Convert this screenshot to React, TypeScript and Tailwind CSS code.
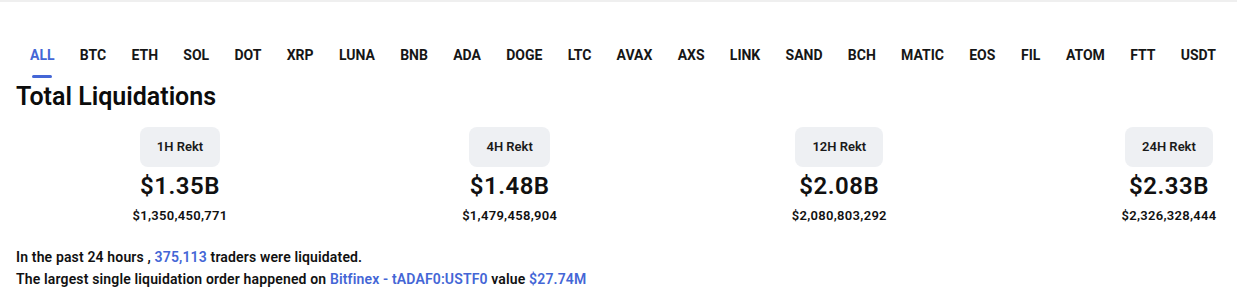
import React from 'react';

const coins = ['ALL', 'BTC', 'ETH', 'SOL', 'DOT', 'XRP', 'LUNA', 'BNB', 'ADA', 'DOGE', 'LTC', 'AVAX', 'AXS', 'LINK', 'SAND', 'BCH', 'MATIC', 'EOS', 'FIL', 'ATOM', 'FTT', 'USDT'];

const stats = [
  { label: '1H Rekt', short: '$1.35B', full: '$1,350,450,771' },
  { label: '4H Rekt', short: '$1.48B', full: '$1,479,458,904' },
  { label: '12H Rekt', short: '$2.08B', full: '$2,080,803,292' },
  { label: '24H Rekt', short: '$2.33B', full: '$2,326,328,444' },
];

export default function App() {
  const active = 'ALL';

  return (
    <div className="w-[1237px] h-[300px] bg-white border-t-2 border-[#efefef] text-[#111] font-['Roboto','Liberation_Sans',sans-serif] overflow-hidden">
      {/* coin tabs */}
      <div className="flex justify-between pl-[30px] pr-[21px] pt-[43px]">
        {coins.map((c) => (
          <button key={c} className="flex flex-col items-center">
            <span className={`text-[14px] leading-[20px] font-bold ${c === active ? 'text-[#4466d6]' : 'text-[#161616]'}`}>{c}</span>
            <span className={`mt-[10px] h-[3px] w-5 rounded-sm ${c === active ? 'bg-[#4466d6]' : 'bg-transparent'}`} />
          </button>
        ))}
      </div>

      <h2 className="mt-[3px] pl-4 text-[25px] leading-[32px] font-semibold text-[#0c0c0c]">Total Liquidations</h2>

      {/* rekt stats */}
      <div className="flex justify-between pl-[120px] pr-[8px] mt-[14px]">
        {stats.map((s) => (
          <div key={s.label} className="w-[120px] flex flex-col items-center">
            <div className="h-10 px-[17px] rounded-lg bg-[#eef0f3] flex items-center justify-center text-[13px] font-semibold text-[#1a1a1a]">
              {s.label}
            </div>
            <div className="mt-[5px] text-[24px] leading-[28px] font-semibold tracking-[0.5px]">{s.short}</div>
            <div className="mt-[6px] text-[13px] leading-[20px] font-semibold tracking-[0.3px]">{s.full}</div>
          </div>
        ))}
      </div>

      <div className="mt-[20px] pl-4 text-[14px] leading-[22px] font-semibold tracking-[0.15px]">
        <p>
          In the past 24 hours , <span className="text-[#4466d6]">375,113</span> traders were liquidated.
        </p>
        <p>
          The largest single liquidation order happened on <span className="text-[#4466d6]">Bitfinex - tADAF0:USTF0</span> value{' '}
          <span className="text-[#4466d6]">$27.74M</span>
        </p>
      </div>
    </div>
  );
}
